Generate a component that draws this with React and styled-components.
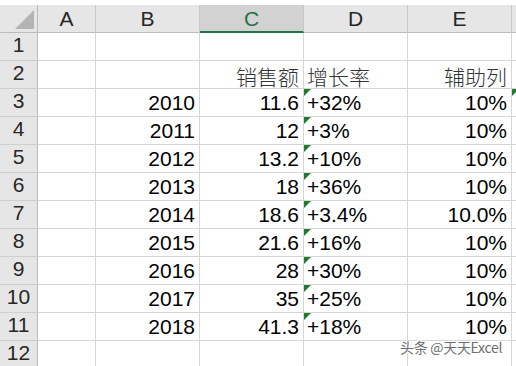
import React from 'react';
import styled, { createGlobalStyle } from 'styled-components';

const GlobalStyle = createGlobalStyle`
    html, body {
        margin: 0;
        padding: 0;
        background: #ffffff;
        overflow: hidden;
    }
    body {
        font-family: 'Liberation Sans', Arial, 'Noto Sans CJK SC', sans-serif;
    }
`

const Sheet = styled.div`
    position: relative;
    width: 516px;
    height: 366px;
    overflow: hidden;
    padding-top: 5px;
    box-sizing: border-box;
    background: #ffffff;
`

const Grid = styled.div`
    display: grid;
    grid-template-columns: 38px 58px 104px 104px 104px 104px 60px;
    grid-template-rows: 28px repeat(12, 28px);
`

const Corner = styled.div`
    position: relative;
    background: #e6e6e6;
    border-right: 1px solid #bcbcbc;
    border-bottom: 1px solid #bcbcbc;
    box-sizing: border-box;
    &::after {
        content: '';
        position: absolute;
        right: 3px;
        bottom: 3px;
        width: 0;
        height: 0;
        border-left: 19px solid transparent;
        border-bottom: 19px solid #b4b4b4;
    }
`

const ColHead = styled.div`
    display: flex;
    align-items: center;
    justify-content: center;
    font-size: 21px;
    color: ${p => (p.$active ? '#217346' : '#262626')};
    background: ${p => (p.$active ? '#d2d2d2' : '#e6e6e6')};
    border-right: 1px solid #c8c8c8;
    border-bottom: ${p => (p.$active ? '2px solid #217346' : '1px solid #bcbcbc')};
    box-sizing: border-box;
    padding-top: 1px;
`

const RowHead = styled.div`
    display: flex;
    align-items: flex-end;
    justify-content: center;
    font-size: 21px;
    color: #262626;
    background: #e6e6e6;
    border-right: 1px solid #bcbcbc;
    border-bottom: 1px solid #cfcfcf;
    box-sizing: border-box;
    padding-bottom: 3px;
`

const Cell = styled.div`
    position: relative;
    display: flex;
    align-items: flex-end;
    justify-content: ${p => (p.$left ? 'flex-start' : 'flex-end')};
    font-size: 21px;
    color: ${p => (p.$cjk ? '#333333' : '#000000')};
    font-family: ${p => (p.$cjk ? "'Noto Sans CJK SC', sans-serif" : "'Liberation Sans', Arial, sans-serif")};
    border-right: 1px solid #d6d6d6;
    border-bottom: 1px solid #d6d6d6;
    box-sizing: border-box;
    padding: 0 4px 3px 3px;
    white-space: nowrap;
    line-height: 1;
    ${p => p.$cjk && 'padding-bottom: 1px; font-weight: 300;'}
    ${p => p.$flag && `
        &::before {
            content: '';
            position: absolute;
            left: 0;
            top: 0;
            width: 0;
            height: 0;
            border-top: 7px solid #1e7b30;
            border-right: 7px solid transparent;
        }
    `}
`

const Watermark = styled.div`
    position: absolute;
    left: 400px;
    top: 337px;
    font-family: 'Noto Sans CJK SC', sans-serif;
    font-size: 14px;
    color: #6e6e6e;
    letter-spacing: -0.3px;
    text-shadow: 0 0 2px #ffffff, 0 0 2px #ffffff, 1px 1px 0 #ffffff, -1px -1px 0 #ffffff;
`

const columns = ['A', 'B', 'C', 'D', 'E', ''];

const data = [
    {},
    { c: '销售额', d: '增长率', e: '辅助列', head: true },
    { b: '2010', c: '11.6', d: '+32%', e: '10%', fFlag: true },
    { b: '2011', c: '12', d: '+3%', e: '10%' },
    { b: '2012', c: '13.2', d: '+10%', e: '10%' },
    { b: '2013', c: '18', d: '+36%', e: '10%' },
    { b: '2014', c: '18.6', d: '+3.4%', e: '10.0%' },
    { b: '2015', c: '21.6', d: '+16%', e: '10%' },
    { b: '2016', c: '28', d: '+30%', e: '10%' },
    { b: '2017', c: '35', d: '+25%', e: '10%' },
    { b: '2018', c: '41.3', d: '+18%', e: '10%' },
    {},
];

function App() {
    return (
        <>
            <GlobalStyle />
            <Sheet>
                <Grid>
                    <Corner />
                    {columns.map((c, i) => (
                        <ColHead key={i} $active={c === 'C'}>{c}</ColHead>
                    ))}
                    {data.map((row, i) => (
                        <React.Fragment key={i}>
                            <RowHead>{i + 1}</RowHead>
                            <Cell />
                            <Cell>{row.b}</Cell>
                            <Cell $cjk={row.head}>{row.c}</Cell>
                            <Cell $left $cjk={row.head} $flag={!!row.b}>{row.d}</Cell>
                            <Cell $cjk={row.head}>{row.e}</Cell>
                            <Cell $flag={row.fFlag} />
                        </React.Fragment>
                    ))}
                </Grid>
                <Watermark>头条 @天天Excel</Watermark>
            </Sheet>
        </>
    )
}

export default App
